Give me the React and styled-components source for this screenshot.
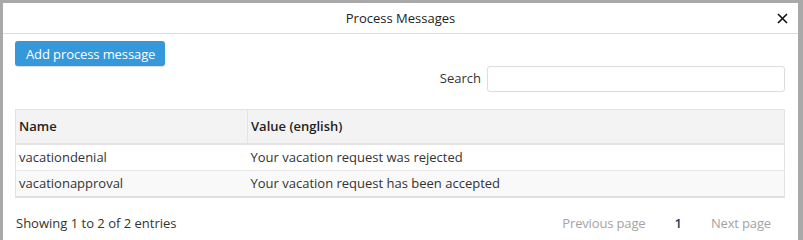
import React from "react";
import styled, { createGlobalStyle } from "styled-components";

const Global = createGlobalStyle`
  html, body { margin: 0; padding: 0; }
  body {
    background: #a9a9a9;
    font-family: "Open Sans", "Noto Sans", sans-serif;
    font-size: 13px;
    color: #333;
    overflow: hidden;
  }
`;

const Page = styled.div`
  padding: 3px 5px 0 3px;
  height: 240px;
  box-sizing: border-box;
`;

const Modal = styled.div`
  background: #fff;
  height: 100%;
  display: flex;
  flex-direction: column;
`;

const Header = styled.div`
  height: 30px;
  border-bottom: 1px solid #dcdcdc;
  display: flex;
  align-items: center;
  justify-content: center;
  position: relative;
  font-size: 13px;
  color: #222;
`;

const Close = styled.button`
  position: absolute;
  right: 8px;
  top: 7px;
  width: 16px;
  height: 16px;
  padding: 0;
  border: 0;
  background: none;
  display: flex;
  align-items: center;
  justify-content: center;
`;

const Body = styled.div`
  padding: 7px 13px 0 12px;
  display: flex;
  flex-direction: column;
`;

const PrimaryButton = styled.button`
  align-self: flex-start;
  height: 25px;
  padding: 0 10px 0 11px;
  background: #3498db;
  color: #fff;
  border: 0;
  border-radius: 3px;
  font-family: inherit;
  font-size: 13px;
  letter-spacing: -0.1px;
  box-shadow: 0 1px 1px rgba(0,0,0,0.15);
`;

const SearchRow = styled.div`
  display: flex;
  justify-content: flex-end;
  align-items: center;
  gap: 6px;
`;

const Label = styled.label`
  font-size: 13px;
  color: #333;
  line-height: 24px;
  margin-bottom: 2px;
`;

const Input = styled.input`
  width: 298px;
  height: 26px;
  box-sizing: border-box;
  border: 1px solid #dcdcdc;
  border-radius: 3px;
  outline: none;
`;

const Table = styled.table`
  margin-top: 17px;
  width: 100%;
  border-collapse: collapse;
  border: 1px solid #e2e2e2;
  border-bottom: 2px solid #e0e0e0;
  font-size: 13px;
`;

const Th = styled.th`
  text-align: left;
  font-weight: 600;
  background: #f3f3f3;
  height: 32px;
  padding: 0 3px 1px;
  border-bottom: 2px solid #e4e4e4;
  border-right: 1px solid #e4e4e4;
  color: #222;
`;

const Tr = styled.tr`
  background: ${(p) => (p.$striped ? "#f9f9f9" : "#fff")};
  border-top: 1px solid #e8e8e8;
`;

const Td = styled.td`
  height: 23px;
  padding: 0 3px 2px;
  color: #333;
`;

const Footer = styled.div`
  display: flex;
  justify-content: space-between;
  align-items: center;
  margin-top: 16px;
  padding-left: 1px;
`;

const Pager = styled.div`
  display: flex;
  align-items: center;
`;

const PageLink = styled.span`
  padding: 0 ${(p) => (p.$current ? "15px" : "14px")};
  color: ${(p) => (p.$current ? "#1f3d63" : "#a3a3a3")};
  font-weight: ${(p) => (p.$current ? 600 : 400)};
  letter-spacing: ${(p) => (p.$current ? "0" : "-0.15px")};
`;

const rows = [
  ["vacationdenial", "Your vacation request was rejected"],
  ["vacationapproval", "Your vacation request has been accepted"],
];

export default function App() {
  return (
    <>
      <Global />
      <Page>
        <Modal>
          <Header>
            Process Messages
            <Close aria-label="close">
              <svg width="11" height="11" viewBox="0 0 11 11">
                <path d="M1 1L10 10M10 1L1 10" stroke="#111" strokeWidth="1.6" />
              </svg>
            </Close>
          </Header>
          <Body>
            <PrimaryButton>Add process message</PrimaryButton>
            <SearchRow>
              <Label>Search</Label>
              <Input />
            </SearchRow>
            <Table>
              <thead>
                <tr>
                  <Th style={{ width: "225px" }}>Name</Th>
                  <Th>Value (english)</Th>
                </tr>
              </thead>
              <tbody>
                {rows.map((r, i) => (
                  <Tr key={r[0]} $striped={i % 2 === 1}>
                    <Td>{r[0]}</Td>
                    <Td>{r[1]}</Td>
                  </Tr>
                ))}
              </tbody>
            </Table>
            <Footer>
              <span>Showing 1 to 2 of 2 entries</span>
              <Pager>
                <PageLink>Previous page</PageLink>
                <PageLink $current>1</PageLink>
                <PageLink>Next page</PageLink>
              </Pager>
            </Footer>
          </Body>
        </Modal>
      </Page>
    </>
  );
}
